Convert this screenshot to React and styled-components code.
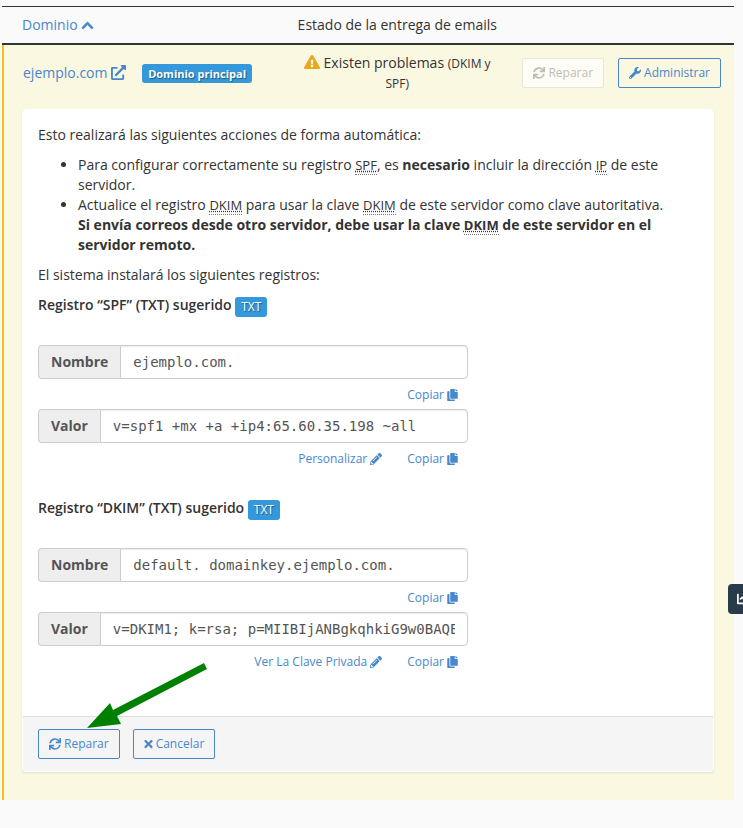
import { useId } from "react";
import styled, { createGlobalStyle } from "styled-components";
import {
  FaChartLine,
  FaChevronUp,
  FaCopy,
  FaExclamationTriangle,
  FaExternalLinkAlt,
  FaPencilAlt,
  FaSync,
  FaTimes,
  FaWrench,
} from "react-icons/fa";

const spfFields = [
  { label: "Nombre", value: "ejemplo.com." },
  { label: "Valor", value: "v=spf1 +mx +a +ip4:65.60.35.198 ~all", action: "Personalizar" },
];

const dkimFields = [
  { label: "Nombre", value: "default._domainkey.ejemplo.com." },
  {
    label: "Valor",
    value: "v=DKIM1; k=rsa; p=MIIBIjANBgkqhkiG9w0BAQEFAAOCAQ8AMIIBCgKCAQEA",
    action: "Ver La Clave Privada",
  },
];

const Field = ({ label, value, action }) => {
  const id = useId();

  return (
    <FieldBlock>
      <InputGroup>
        <Addon htmlFor={id}>{label}</Addon>
        <Input id={id} type="text" value={value} readOnly />
      </InputGroup>
      <FieldActions>
        {action && (
          <LinkButton type="button">
            {action} <FaPencilAlt />
          </LinkButton>
        )}
        <LinkButton type="button">
          Copiar <CopyIcon />
        </LinkButton>
      </FieldActions>
    </FieldBlock>
  );
};

const SuggestedRecord = ({ name, fields }) => (
  <Record>
    <RecordTitle>
      Registro “{name}” (TXT) sugerido <TypeBadge>TXT</TypeBadge>
    </RecordTitle>
    {fields.map((field) => (
      <Field key={field.label} {...field} />
    ))}
  </Record>
);

// Panel con el detalle de la reparación
const RepairPanel = () => (
  <Panel>
    <PanelBody>
      <Text>Esto realizará las siguientes acciones de forma automática:</Text>
      <List>
        <li>
          Para configurar correctamente su registro <Abbr>SPF</Abbr>, es{" "}
          <strong>necesario</strong> incluir la dirección <Abbr>IP</Abbr> de este servidor.
        </li>
        <li>
          Actualice el registro <Abbr>DKIM</Abbr> para usar la clave <Abbr>DKIM</Abbr> de
          este servidor como clave autoritativa.
          <br />
          <strong>
            Si envía correos desde otro servidor, debe usar la clave <Abbr>DKIM</Abbr> de
            este servidor en el servidor remoto.
          </strong>
        </li>
      </List>
      <Text>El sistema instalará los siguientes registros:</Text>
      <SuggestedRecord name="SPF" fields={spfFields} />
      <SuggestedRecord name="DKIM" fields={dkimFields} />
    </PanelBody>
    <PanelFooter>
      <Button type="button">
        <FaSync /> Reparar
      </Button>
      <Button type="button">
        <CloseIcon /> Cancelar
      </Button>
      <Arrow viewBox="0 0 120 66" aria-hidden="true">
        <polygon points="0,65 23,40 26,47 117,0 120,6 30,53 34,61" />
      </Arrow>
    </PanelFooter>
  </Panel>
);

const App = () => (
  <>
    <GlobalStyle />
    <Page>
      <Table>
        <colgroup>
          <WideCol />
          <StatusCol />
          <col />
        </colgroup>
        <thead>
          <tr>
            <HeadCell>
              <SortLink href="#dominio">
                Dominio <FaChevronUp />
              </SortLink>
            </HeadCell>
            <HeadCell $center>Estado de la entrega de emails</HeadCell>
            <HeadCell />
          </tr>
        </thead>
        <Domain>
          <tr>
            <DomainCell>
              <DomainInfo>
                <DomainLink href="#ejemplo">
                  ejemplo.com <FaExternalLinkAlt />
                </DomainLink>
                <MainBadge>Dominio principal</MainBadge>
              </DomainInfo>
            </DomainCell>
            <Cell>
              <Status>
                <FaExclamationTriangle /> Existen problemas <small>(DKIM y SPF)</small>
              </Status>
            </Cell>
            <Cell>
              <RowActions>
                <Button type="button" disabled>
                  <FaSync /> Reparar
                </Button>
                <Button type="button">
                  <FaWrench /> Administrar
                </Button>
              </RowActions>
            </Cell>
          </tr>
          <tr>
            <DetailCell colSpan={3}>
              <RepairPanel />
            </DetailCell>
          </tr>
        </Domain>
      </Table>
    </Page>
    <StatsToggle type="button" aria-label="Estadísticas">
      <FaChartLine />
    </StatsToggle>
  </>
);

export default App;

const GlobalStyle = createGlobalStyle`
  * {
    box-sizing: border-box;
  }

  body {
    margin: 0;
    background: #fafafa;
    color: #333;
    font-family: "Open Sans", sans-serif;
    font-size: 14px;
    line-height: 20px;
  }

  button,
  input {
    font-family: inherit;
  }
`;

const Page = styled.main`
  padding: 6px 9px 28px 2px;
`;

const Table = styled.table`
  width: 100%;
  table-layout: fixed;
  border-collapse: separate;
  border-spacing: 0;
`;

const WideCol = styled.col`
  width: 40%;
`;

const StatusCol = styled.col`
  width: 28%;
`;

const HeadCell = styled.th`
  padding: 8px ${({ $center }) => ($center ? "0" : "20px")};
  border-top: 1px solid #333;
  border-bottom: 2px solid #333;
  font-weight: 400;
  text-align: ${({ $center }) => ($center ? "center" : "left")};
  white-space: nowrap;
`;

const SortLink = styled.a`
  color: #4887cc;
  text-decoration: none;

  svg {
    width: 13px;
    height: 13px;
    vertical-align: -2px;
    stroke: currentColor;
    stroke-width: 30px;
  }
`;

// Fila del dominio resaltada en amarillo con borde lateral
const Domain = styled.tbody`
  background: #fbf8e1;
`;

const Cell = styled.td`
  padding: 8px;
  vertical-align: middle;
`;

const DomainCell = styled(Cell)`
  padding-left: 19px;
  border-left: 2px solid #f0c419;
`;

const DetailCell = styled(Cell)`
  padding: 8px 20px 28px 18px;
  border-left: 2px solid #f0c419;
`;

const DomainInfo = styled.div`
  display: flex;
  align-items: center;
  gap: 16px;
`;

const DomainLink = styled.a`
  color: #4887cc;
  text-decoration: none;

  svg {
    width: 15px;
    height: 15px;
    vertical-align: -2px;
  }
`;

const Badge = styled.span`
  display: inline-block;
  padding: 0 6px;
  border-radius: 3px;
  background: #3498db;
  color: #fff;
  text-shadow: 1px 1px 1px rgba(0, 0, 0, 0.4);
`;

const MainBadge = styled(Badge)`
  font-size: 11px;
  font-weight: 700;
  line-height: 19px;
`;

const TypeBadge = styled(Badge)`
  font-size: 12px;
  font-weight: 400;
  line-height: 20px;
  vertical-align: -1px;
`;

const Status = styled.div`
  text-align: center;

  svg {
    width: 16px;
    height: 16px;
    color: #e7a922;
    vertical-align: -2px;
  }

  small {
    font-size: 12px;
    line-height: 16px;
  }
`;

const RowActions = styled.div`
  display: flex;
  justify-content: flex-end;
  gap: 14px;
  padding-right: 5px;
`;

const Button = styled.button`
  display: inline-flex;
  align-items: center;
  gap: 3px;
  height: 30px;
  padding: 0 10px;
  border: 1px solid #4887cc;
  border-radius: 2px;
  background: transparent;
  color: #4887cc;
  font-size: 12px;
  line-height: 18px;
  white-space: nowrap;

  svg {
    height: 12px;
  }

  &:disabled {
    border-color: #e6e6dc;
    background: #fefdf5;
    color: #bcbcb4;
  }
`;

const CloseIcon = styled(FaTimes)`
  width: 9px;
`;

const CopyIcon = styled(FaCopy)`
  width: 11px;
`;

const Panel = styled.section`
  border: 1px solid #fff;
  border-radius: 4px;
  background: #fff;
  box-shadow: 0 1px 2px rgba(0, 0, 0, 0.1);
`;

const PanelBody = styled.div`
  padding: 15px;
`;

const Text = styled.p`
  margin: 0 0 10px;
`;

const List = styled.ul`
  margin: 0 0 10px;
  padding-left: 40px;
`;

const Abbr = styled.abbr`
  border-bottom: 1px dotted #777;
  text-decoration: underline dotted;
  font-size: 13px;
  line-height: 16px;
`;

const Record = styled.section`
  max-width: 430px;
  margin-bottom: 29px;
`;

const RecordTitle = styled.h4`
  height: 20px;
  margin: 0 0 30px;
  font-size: 14px;
  font-weight: 600;
`;

const FieldBlock = styled.div`
  & + & {
    margin-top: 4px;
  }
`;

const InputGroup = styled.div`
  display: flex;
  height: 34px;
`;

// Etiqueta gris pegada al campo de texto
const Addon = styled.label`
  padding: 6px 12px;
  border: 1px solid #ccc;
  border-right: 0;
  border-radius: 4px 0 0 4px;
  background: #eee;
  color: #555;
  font-weight: 700;
`;

const Input = styled.input`
  flex: 1;
  min-width: 0;
  padding: 6px 12px;
  border: 1px solid #ccc;
  border-radius: 0 4px 4px 0;
  background: #fff;
  box-shadow: inset 0 1px 1px rgba(0, 0, 0, 0.075);
  color: #555;
  font-family: "DejaVu Sans Mono", monospace;
  font-size: 14px;
`;

const FieldActions = styled.div`
  display: flex;
  justify-content: flex-end;
  gap: 25px;
  padding: 6px 10px 0 0;
`;

const LinkButton = styled.button`
  display: inline-flex;
  align-items: center;
  gap: 3px;
  padding: 0;
  border: 0;
  background: none;
  color: #4887cc;
  font-size: 12px;
  line-height: 20px;

  svg {
    height: 12px;
  }
`;

const PanelFooter = styled.footer`
  position: relative;
  display: flex;
  gap: 13px;
  padding: 12px 15px;
  border-top: 1px solid #ddd;
  border-radius: 0 0 3px 3px;
  background: #f5f5f5;
`;

// Flecha verde que señala el botón de reparar
const Arrow = styled.svg`
  position: absolute;
  left: 64px;
  top: -54px;
  width: 120px;
  height: 66px;
  fill: #008000;
`;

// Botón lateral pegado al borde de la ventana
const StatsToggle = styled.button`
  position: fixed;
  top: 584px;
  right: -15px;
  width: 30px;
  height: 30px;
  padding: 0 0 0 9px;
  border: 0;
  border-radius: 4px;
  background: #293a4a;
  color: #fff;

  svg {
    display: block;
    width: 14px;
    height: 14px;
  }
`;
